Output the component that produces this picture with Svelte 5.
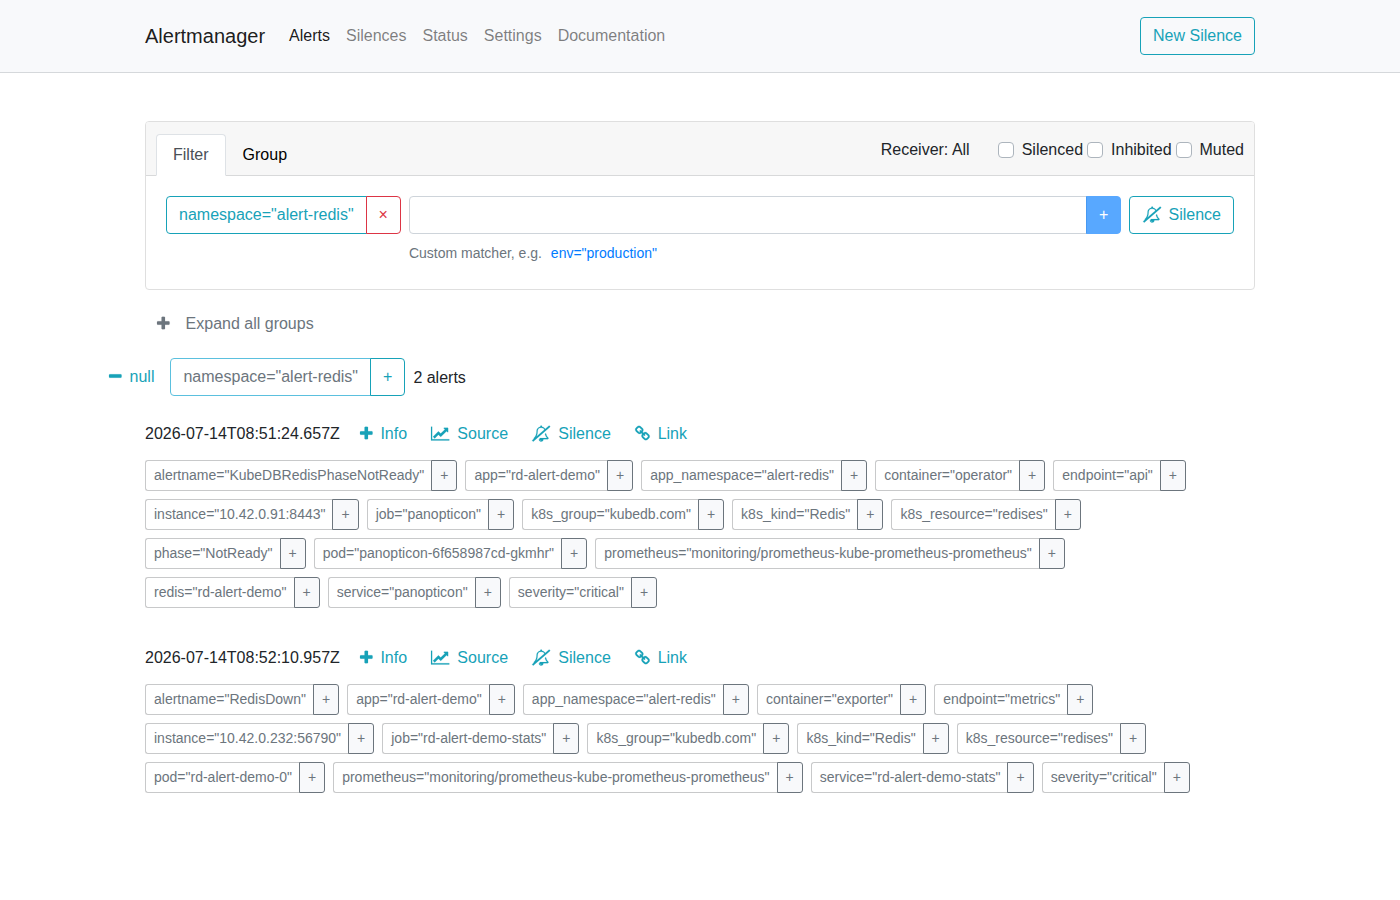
<script lang="ts">
  const links = ['Alerts', 'Silences', 'Status', 'Settings', 'Documentation'];
  const checks = ['Silenced', 'Inhibited', 'Muted'];

  const icons: Record<string, { x: number; w: number; d: string }> = {
    plus: {
      x: 192,
      w: 1408,
      d: 'M1600 736v192q0 40-28 68t-68 28h-416v416q0 40-28 68t-68 28h-192q-40 0-68-28t-28-68v-416h-416q-40 0-68-28t-28-68v-192q0-40 28-68t68-28h416v-416q0-40 28-68t68-28h192q40 0 68 28t28 68v416h416q40 0 68 28t28 68z'
    },
    minus: {
      x: 192,
      w: 1408,
      d: 'M1600 736v192q0 40-28 68t-68 28h-1216q-40 0-68-28t-28-68v-192q0-40 28-68t68-28h1216q40 0 68 28t28 68z'
    },
    chart: {
      x: 0,
      w: 2048,
      d: 'M2048 1536v128h-2048v-1536h128v1408h1920zm-128-1248v435q0 21-19.5 29.5t-35.5-7.5l-121-121-633 633q-10 10-23 10t-23-10l-233-233-416 416-192-192 585-585q10-10 23-10t23 10l233 233 464-464-121-121q-16-16-7.5-35.5t29.5-19.5h435q14 0 23 9t9 23z'
    },
    bell: {
      x: 0,
      w: 2048,
      d: 'M1040 1696q0-16-16-16-59 0-101.5-42.5t-42.5-101.5q0-16-16-16t-16 16q0 73 51.5 124.5t124.5 51.5q16 0 16-16zM502 1221l877-760q-42-88-132.5-146.5t-223.5-58.5q-93 0-169.5 31.5t-121.5 80.5-69 103-24 105q0 384-137 645zM1856 1408q0 52-38 90t-90 38h-448q0 106-75 181t-181 75-180.5-74.5-75.5-180.5l149-129h757q-166-187-227-459l111-97q61 356 298 556zM1944 16l84 96q8 10 7.5 23.5t-10.5 22.5l-1872 1622q-10 8-23.5 7t-22.5-11l-84-96q-8-10-7.5-23.5t10.5-21.5l186-161q-19-32-19-66 50-42 91-88t85-119.5 74.5-158.5 50-206 19.5-260q0-152 117-282.5t307-158.5q-8-19-8-39 0-40 28-68t68-28 68 28 28 68q0 20-8 39 124 18 219 82.5t148 157.5l418-363q10-8 23.5-7t22.5 11z'
    },
    chain: {
      x: 64,
      w: 1664,
      d: 'M1520 1216q0-40-28-68l-208-208q-28-28-68-28-42 0-72 32 3 3 19 18.5t21.5 21.5 15 19 13 25.5 3.5 27.5q0 40-28 68t-68 28q-15 0-27.5-3.5t-25.5-13-19-15-21.5-21.5-18.5-19q-33 31-33 73 0 40 28 68l206 207q27 27 68 27 40 0 68-26l147-146q28-28 28-67zm-703-705q0-40-28-68l-206-207q-28-28-68-28-39 0-68 27l-147 146q-28 28-28 67 0 40 28 68l208 208q27 27 68 27 42 0 72-31-3-3-19-18.5t-21.5-21.5-15-19-13-25.5-3.5-27.5q0-40 28-68t68-28q15 0 27.5 3.5t25.5 13 19 15 21.5 21.5 18.5 19q33-31 33-73zm895 705q0 120-85 203l-147 146q-83 83-203 83-121 0-204-85l-206-207q-83-83-83-203 0-123 88-209l-88-88q-86 88-208 88-120 0-204-84l-208-208q-84-84-84-204t85-203l147-146q83-83 203-83 121 0 204 85l206 207q83 83 83 203 0 123-88 209l88 88q86-88 208-88 120 0 204 84l208 208q84 84 84 204z'
    }
  };

  const actions = [
    { icon: 'plus', label: 'Info' },
    { icon: 'chart', label: 'Source' },
    { icon: 'bell', label: 'Silence' },
    { icon: 'chain', label: 'Link' }
  ];

  const alerts = [
    {
      startsAt: '2026-07-14T08:51:24.657Z',
      labels: [
        ['alertname', 'KubeDBRedisPhaseNotReady'],
        ['app', 'rd-alert-demo'],
        ['app_namespace', 'alert-redis'],
        ['container', 'operator'],
        ['endpoint', 'api'],
        ['instance', '10.42.0.91:8443'],
        ['job', 'panopticon'],
        ['k8s_group', 'kubedb.com'],
        ['k8s_kind', 'Redis'],
        ['k8s_resource', 'redises'],
        ['phase', 'NotReady'],
        ['pod', 'panopticon-6f658987cd-gkmhr'],
        ['prometheus', 'monitoring/prometheus-kube-prometheus-prometheus'],
        ['redis', 'rd-alert-demo'],
        ['service', 'panopticon'],
        ['severity', 'critical']
      ]
    },
    {
      startsAt: '2026-07-14T08:52:10.957Z',
      labels: [
        ['alertname', 'RedisDown'],
        ['app', 'rd-alert-demo'],
        ['app_namespace', 'alert-redis'],
        ['container', 'exporter'],
        ['endpoint', 'metrics'],
        ['instance', '10.42.0.232:56790'],
        ['job', 'rd-alert-demo-stats'],
        ['k8s_group', 'kubedb.com'],
        ['k8s_kind', 'Redis'],
        ['k8s_resource', 'redises'],
        ['pod', 'rd-alert-demo-0'],
        ['prometheus', 'monitoring/prometheus-kube-prometheus-prometheus'],
        ['service', 'rd-alert-demo-stats'],
        ['severity', 'critical']
      ]
    }
  ];

  let matcher = $state('');
</script>

{#snippet icon(name: string)}
  <svg class="icon {name}" viewBox="{icons[name].x} 0 {icons[name].w} 1792" width={icons[name].w / 112} height="16">
    <path transform="translate(0 -50)" d={icons[name].d} />
  </svg>
{/snippet}

<header>
  <nav class="container">
    <a class="brand" href="#/">Alertmanager</a>
    <div class="links">
      {#each links as link, i}
        <a href="#/{link.toLowerCase()}" class:active={i === 0}>{link}</a>
      {/each}
    </div>
    <button class="btn info">New Silence</button>
  </nav>
</header>

<main class="container">
  <section class="card">
    <div class="card-header">
      <div class="tabs">
        <button class="tab active">Filter</button>
        <button class="tab">Group</button>
      </div>
      <div class="options">
        <span class="receiver">Receiver: All</span>
        {#each checks as check}
          <label><input type="checkbox" /><span>{check}</span></label>
        {/each}
      </div>
    </div>
    <div class="card-body">
      <div class="group">
        <button class="btn info">namespace="alert-redis"</button>
        <button class="btn danger">×</button>
      </div>
      <div class="matcher">
        <div class="group">
          <input type="text" bind:value={matcher} />
          <button class="btn primary" disabled={!matcher}>+</button>
        </div>
        <small>Custom matcher, e.g. <button class="example" onclick={() => (matcher = 'env="production"')}>env="production"</button></small>
      </div>
      <button class="btn info">{@render icon('bell')}Silence</button>
    </div>
  </section>

  <button class="btn expand">{@render icon('plus')}Expand all groups</button>

  <div class="alert-group">
    <button class="btn link toggle">{@render icon('minus')}null</button>
    <div class="group">
      <span class="btn group-label">namespace="alert-redis"</span>
      <button class="btn info">+</button>
    </div>
    <span class="count">2 alerts</span>
  </div>

  <ul>
    {#each alerts as alert}
      <li>
        <div class="alert-head">
          <time>{alert.startsAt}</time>
          {#each actions as action}
            <button class="btn link">{@render icon(action.icon)}{action.label}</button>
          {/each}
        </div>
        <div class="labels">
          {#each alert.labels as [key, value]}
            <div class="group label">
              <span class="btn small">{key}="{value}"</span>
              <button class="btn small add">+</button>
            </div>
          {/each}
        </div>
      </li>
    {/each}
  </ul>
</main>

<style>
  :global(body) {
    margin: 0;
    background: #fff;
    color: #212529;
    font: 16px/1.5 "Liberation Sans", Arial, sans-serif;
  }
  :global(*) {
    box-sizing: border-box;
  }
  button,
  input {
    font: inherit;
    margin: 0;
  }
  a {
    text-decoration: none;
  }
  .container {
    width: 1110px;
    margin: 0 auto;
  }
  header {
    background: #f8f9fb;
    border-bottom: 1px solid #d5d8db;
  }
  nav {
    display: flex;
    align-items: center;
    height: 72px;
  }
  .brand {
    color: rgba(0, 0, 0, 0.9);
    font-size: 20px;
    margin-right: 16px;
  }
  .links {
    display: flex;
    flex: 1;
  }
  .links a {
    padding: 8px;
    color: rgba(0, 0, 0, 0.5);
  }
  .links a.active {
    color: rgba(0, 0, 0, 0.9);
  }
  .btn {
    display: inline-block;
    padding: 6px 12px;
    border: 1px solid transparent;
    border-radius: 4px;
    background: transparent;
    line-height: 24px;
    white-space: nowrap;
  }
  .info {
    color: #17a2b8;
    border-color: #17a2b8;
  }
  .danger {
    color: #dc3545;
    border-color: #dc3545;
  }
  .primary {
    color: #fff;
    background: #007bff;
    border-color: #007bff;
  }
  .primary:disabled {
    opacity: 0.65;
  }
  .icon {
    fill: currentColor;
    stroke: currentColor;
    stroke-width: 18;
    vertical-align: -2.8px;
    margin-right: 8px;
    overflow: visible;
  }
  .icon.bell {
    margin: 0 7.6px 0 0.4px;
  }
  .group {
    display: flex;
  }
  .group > :first-child {
    border-top-right-radius: 0;
    border-bottom-right-radius: 0;
  }
  .group > :last-child {
    margin-left: -1px;
    border-top-left-radius: 0;
    border-bottom-left-radius: 0;
  }
  .card {
    margin-top: 48px;
    border: 1px solid #dfdfdf;
    border-radius: 4px;
  }
  .card-header {
    display: flex;
    justify-content: space-between;
    height: 54px;
    padding: 12px 10px 0;
    background: #f7f7f7;
    border-bottom: 1px solid #d8d9da;
    border-radius: 3px 3px 0 0;
  }
  .tabs {
    display: flex;
  }
  .tab {
    height: 42px;
    padding: 0 16px;
    color: #000;
    background: none;
    border: 1px solid transparent;
    border-radius: 4px 4px 0 0;
  }
  .tab.active {
    color: #495057;
    background: #fff;
    border-color: #dee2e6 #dee2e6 #fff;
  }
  .options {
    display: flex;
    height: 31px;
    align-items: center;
  }
  .receiver {
    margin-right: 28px;
  }
  label {
    display: flex;
    align-items: center;
    margin-left: 4px;
  }
  .receiver + label {
    margin-left: 0;
  }
  input[type='checkbox'] {
    appearance: none;
    width: 16px;
    height: 16px;
    margin-right: 8px;
    background: #fff;
    border: 1px solid #adb5bd;
    border-radius: 4px;
  }
  .card-body {
    display: flex;
    align-items: flex-start;
    gap: 8px;
    height: 113px;
    padding: 20px;
  }
  .matcher {
    flex: 1;
  }
  .matcher input {
    flex: 1;
    height: 38px;
    border: 1px solid #ced4da;
    border-radius: 4px;
  }
  small {
    display: block;
    margin-top: 9px;
    color: #6c757d;
    font-size: 14px;
  }
  .example {
    padding: 0;
    margin-left: 5px;
    border: 0;
    background: none;
    color: #007bff;
  }
  .expand {
    display: block;
    margin-top: 15px;
    padding-left: 11px;
    color: #6c757d;
  }
  .expand .icon {
    margin-right: 16px;
  }
  .alert-group {
    display: flex;
    align-items: flex-start;
    height: 39px;
    margin: 15px 0 0 -48px;
  }
  .link {
    color: #17a2b8;
    border-width: 1px 0;
  }
  .toggle {
    margin-right: 4px;
  }
  .group-label {
    color: #6c757d;
    border-color: #5bc0de;
  }
  .count {
    margin-left: 8px;
    line-height: 39px;
  }
  ul {
    list-style: none;
    margin: 18px 0 0;
    padding: 0;
  }
  li {
    margin-bottom: 23px;
  }
  .alert-head {
    display: flex;
    align-items: center;
    height: 38px;
    margin-bottom: 7px;
  }
  time {
    margin-right: 8px;
  }
  .labels {
    display: flex;
    flex-wrap: wrap;
  }
  .label {
    margin: 0 8px 8px 0;
  }
  .small {
    padding: 4px 8px;
    font-size: 14px;
    line-height: 21px;
    border-radius: 3px;
    border-color: #c8c9ca;
    color: #6c757d;
  }
  .label > :first-child {
    border-right: 0;
  }
  .small.add {
    background: #f8f9fb;
    border-color: #6c757d;
  }
</style>
